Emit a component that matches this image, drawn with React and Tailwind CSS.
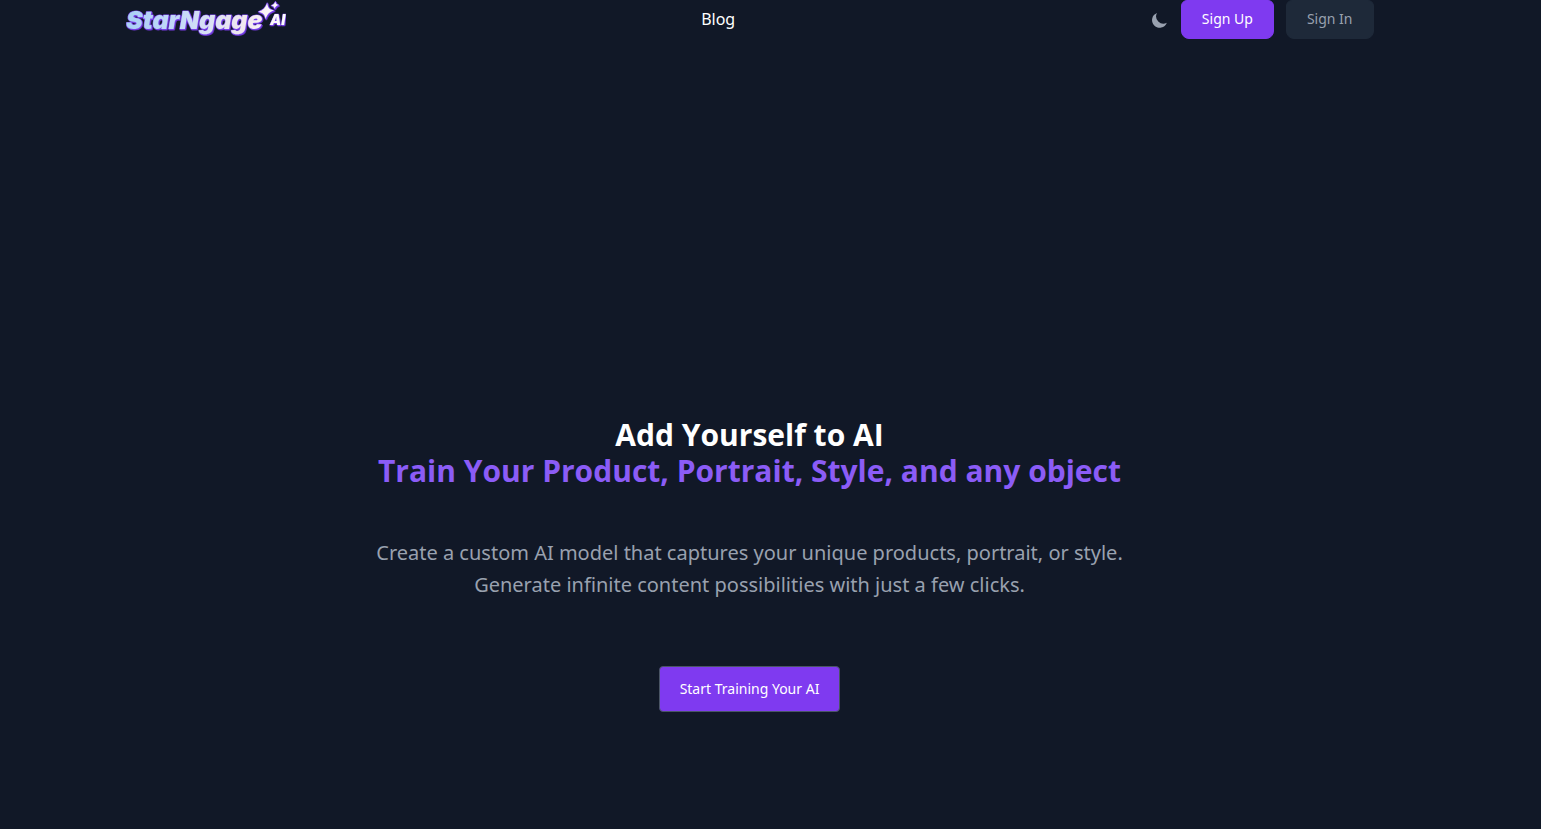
function Logo() {
  return (
    <svg
      role="img"
      aria-label="StarNgage AI"
      viewBox="0 0 160 39"
      className="block h-[39px] w-40 shrink-0"
    >
      <defs>
        <linearGradient id="wordmark" gradientUnits="userSpaceOnUse" x1="0" y1="0" x2="160" y2="0">
          <stop offset="0" stopColor="#a9d0f5" />
          <stop offset="0.35" stopColor="#c6daf8" />
          <stop offset="0.75" stopColor="#f3e8ee" />
          <stop offset="1" stopColor="#ffffff" />
        </linearGradient>
        <filter id="edge" x="-5%" y="-10%" width="110%" height="125%">
          <feDropShadow dx="0.7" dy="0.9" stdDeviation="0.3" floodColor="#7c3aed" />
        </filter>
      </defs>
      <g
        fill="url(#wordmark)"
        stroke="#7c4af0"
        strokeWidth="1.1"
        strokeLinejoin="round"
        filter="url(#edge)"
        style={{ paintOrder: "stroke" }}
        fontFamily="Inter, 'Liberation Sans', sans-serif"
        fontWeight="900"
        fontStyle="italic"
      >
        <text x="0" y="29" fontSize="25">StarNgage</text>
        <text x="144" y="25" fontSize="14" strokeWidth="0.6">AI</text>
        <path d="M141.2 3C141.8 8 143.2 9.3 148 10.6C143.4 12.2 141.6 13.8 139.6 18.8C138.6 14.4 137 12.8 132.4 11.8C137.2 10 139.2 8.2 141.2 3Z" />
        <path d="M149.4 1.6C149.8 4 150.4 4.5 152.6 5C150.4 5.8 149.6 6.5 148.6 8.8C148.2 6.7 147.4 6 145.2 5.5C147.6 4.7 148.4 4 149.4 1.6Z" />
      </g>
    </svg>
  );
}

function MoonIcon() {
  return (
    <svg aria-hidden="true" viewBox="0 0 20 20" fill="currentColor" className="size-[18px]">
      <path d="M17.6 13.1A8.1 8.1 0 016.7 2.1a8.5 8.5 0 1010.9 11z" />
    </svg>
  );
}

function Header() {
  return (
    <header className="mx-auto flex w-full max-w-[1248px] items-start justify-between">
      <a href="#home">
        <Logo />
      </a>
      <nav className="flex h-[38px] items-center">
        <a href="#blog" className="text-base text-white">
          Blog
        </a>
      </nav>
      <div className="flex h-[39px] items-stretch gap-3">
        <button type="button" aria-label="Toggle dark mode" className="text-gray-400">
          <MoonIcon />
        </button>
        <button
          type="button"
          className="rounded-t-md rounded-b-lg border border-[#7f3af0] bg-[#7f3af0] px-5 pb-0.5 text-sm text-white"
        >
          Sign Up
        </button>
        <button
          type="button"
          className="rounded-t-md rounded-b-lg border border-gray-800 bg-gray-800 px-5 pb-0.5 text-sm text-gray-400"
        >
          Sign In
        </button>
      </div>
    </header>
  );
}

export default function App() {
  return (
    <div className="min-h-screen bg-[#111827] pr-[42px] font-['Noto_Sans','Open_Sans',sans-serif]">
      <Header />
      <main className="flex flex-col items-center px-4 pt-[378px] pb-28 text-center">
        <h1 className="font-['Open_Sans','Noto_Sans',sans-serif] text-3xl leading-9 font-bold text-white">
          Add Yourself to AI
          <span className="block text-[#8b5cf6]">Train Your Product, Portrait, Style, and any object</span>
        </h1>
        <p className="mt-12 max-w-3xl text-xl leading-8 text-gray-400">
          Create a custom AI model that captures your unique products, portrait, or style. Generate
          infinite content possibilities with just a few clicks.
        </p>
        <button
          type="button"
          className="mt-[65px] h-[46px] rounded-sm border border-gray-600 bg-[#7f3af0] px-5 text-sm text-white"
        >
          Start Training Your AI
        </button>
      </main>
    </div>
  );
}
